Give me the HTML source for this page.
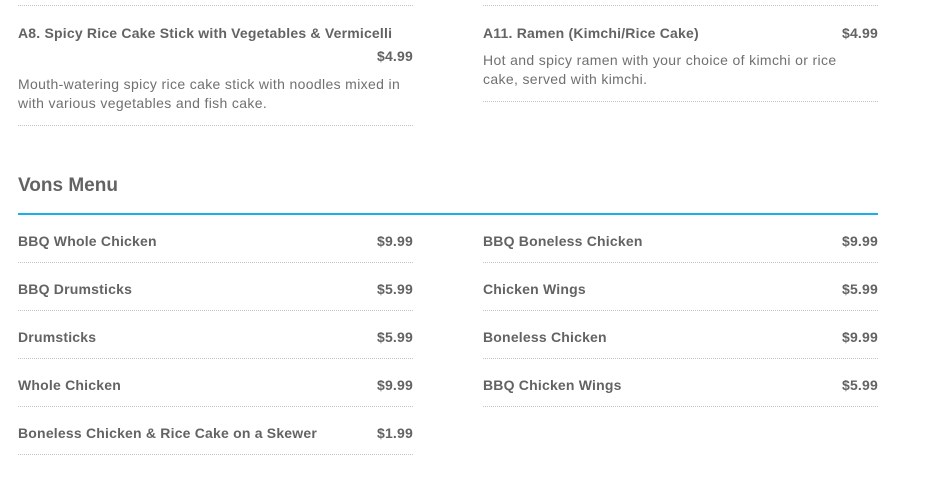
<!DOCTYPE html>
<html><head><style>
body{margin:0;width:941px;height:479px;background:#fff;position:relative;overflow:hidden;font-family:"Liberation Sans",sans-serif;color:#666}
.a{position:absolute;white-space:nowrap}
.b{font-weight:bold;font-size:14px;color:#636363;letter-spacing:0.2px}
.d{font-size:14px;color:#707070;line-height:19px;letter-spacing:0.35px}
.l{position:absolute;height:0;border-top:1px dotted #c4c4c4}
</style></head><body>
<div class="l" style="left:18px;top:5px;width:395px"></div>
<div class="l" style="left:483px;top:5px;width:395px"></div>

<div class="a b" style="left:18px;top:25px">A8. Spicy Rice Cake Stick with Vegetables &amp; Vermicelli</div>
<div class="a b" style="right:528px;top:48px">$4.99</div>
<div class="a d" style="left:18px;top:75px">Mouth-watering spicy rice cake stick with noodles mixed in<br>with various vegetables and fish cake.</div>
<div class="l" style="left:18px;top:125px;width:395px"></div>

<div class="a b" style="left:483px;top:25px">A11. Ramen (Kimchi/Rice Cake)</div>
<div class="a b" style="right:63px;top:25px">$4.99</div>
<div class="a d" style="left:483px;top:51px">Hot and spicy ramen with your choice of kimchi or rice<br>cake, served with kimchi.</div>
<div class="l" style="left:483px;top:101px;width:395px"></div>

<div class="a" style="left:18px;top:175px;font-size:19px;font-weight:bold;color:#636363">Vons Menu</div>
<div style="position:absolute;left:18px;top:213px;width:860px;height:2px;background:#1ab0e8"></div>

<div class="a b" style="left:18px;top:233px">BBQ Whole Chicken</div><div class="a b" style="right:528px;top:233px">$9.99</div>
<div class="l" style="left:18px;top:262px;width:395px"></div>
<div class="a b" style="left:18px;top:281px">BBQ Drumsticks</div><div class="a b" style="right:528px;top:281px">$5.99</div>
<div class="l" style="left:18px;top:310px;width:395px"></div>
<div class="a b" style="left:18px;top:329px">Drumsticks</div><div class="a b" style="right:528px;top:329px">$5.99</div>
<div class="l" style="left:18px;top:358px;width:395px"></div>
<div class="a b" style="left:18px;top:377px">Whole Chicken</div><div class="a b" style="right:528px;top:377px">$9.99</div>
<div class="l" style="left:18px;top:406px;width:395px"></div>
<div class="a b" style="left:18px;top:425px">Boneless Chicken &amp; Rice Cake on a Skewer</div><div class="a b" style="right:528px;top:425px">$1.99</div>
<div class="l" style="left:18px;top:454px;width:395px"></div>

<div class="a b" style="left:483px;top:233px">BBQ Boneless Chicken</div><div class="a b" style="right:63px;top:233px">$9.99</div>
<div class="l" style="left:483px;top:262px;width:395px"></div>
<div class="a b" style="left:483px;top:281px">Chicken Wings</div><div class="a b" style="right:63px;top:281px">$5.99</div>
<div class="l" style="left:483px;top:310px;width:395px"></div>
<div class="a b" style="left:483px;top:329px">Boneless Chicken</div><div class="a b" style="right:63px;top:329px">$9.99</div>
<div class="l" style="left:483px;top:358px;width:395px"></div>
<div class="a b" style="left:483px;top:377px">BBQ Chicken Wings</div><div class="a b" style="right:63px;top:377px">$5.99</div>
<div class="l" style="left:483px;top:406px;width:395px"></div>
</body></html>
